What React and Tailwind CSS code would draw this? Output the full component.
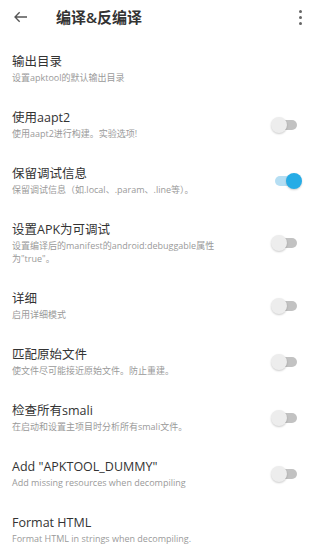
import React from 'react';

const font = { fontFamily: '"Open Sans", "Noto Sans CJK SC", sans-serif' };

const items = [
  { title: '输出目录', desc: '设置apktool的默认输出目录' },
  { title: '使用aapt2', desc: '使用aapt2进行构建。实验选项!', toggle: false },
  { title: '保留调试信息', desc: '保留调试信息（如.local、.param、.line等）。', toggle: true },
  { title: '设置APK为可调试', desc: '设置编译后的manifest的android:debuggable属性为"true"。', toggle: false },
  { title: '详细', desc: '启用详细模式', toggle: false },
  { title: '匹配原始文件', desc: '使文件尽可能接近原始文件。防止重建。', toggle: false },
  { title: '检查所有smali', desc: '在启动和设置主项目时分析所有smali文件。', toggle: false },
  { title: 'Add "APKTOOL_DUMMY"', desc: 'Add missing resources when decompiling', toggle: false },
  { title: 'Format HTML', desc: 'Format HTML in strings when decompiling.' },
];

const Toggle = ({ on }) => (
  <div className="relative w-[31px] h-[16px] shrink-0 mr-[7px]">
    <div
      className={`absolute left-[4px] top-[3px] w-[22px] h-[10px] rounded-full ${on ? 'bg-[#b5def3]' : 'bg-[#c2c2c2]'}`}
    />
    <div
      className={`absolute top-0 w-[16px] h-[16px] rounded-full shadow-[0_1px_2px_rgba(0,0,0,0.2)] ${on ? 'left-[15px] bg-[#26ace6]' : 'left-0 bg-[#ededed]'}`}
    />
  </div>
);

export default function App() {
  return (
    <div className="w-[309px] h-[550px] overflow-hidden bg-white" style={font}>
      {/* Toolbar */}
      <div className="h-[40px] flex items-center pb-[6px]">
        <div className="w-[56px] shrink-0 pl-[13px]">
          <svg className="w-[16px] h-[16px] text-[#555]" viewBox="0 0 24 24" fill="none" stroke="currentColor" strokeWidth="2">
            <path d="M21 12H3M10 5l-7 7 7 7" />
          </svg>
        </div>
        <div className="text-[15px] font-semibold text-[#333] leading-none">编译&amp;反编译</div>
        <div className="ml-auto mr-[7px] flex flex-col gap-[3px]">
          <span className="w-[3px] h-[3px] rounded-full bg-[#666]" />
          <span className="w-[3px] h-[3px] rounded-full bg-[#666]" />
          <span className="w-[3px] h-[3px] rounded-full bg-[#666]" />
        </div>
      </div>

      {items.map((it, i) => (
        <div key={i} className="flex items-center pl-[12px] pt-[13px] pb-[12px]">
          <div className="flex-1 min-w-0">
            <div className="text-[12.5px] leading-[18px] text-[#333]">{it.title}</div>
            <div className="w-[208px] text-[9px] leading-[13px] text-[#9a9a9a]">{it.desc}</div>
          </div>
          {it.toggle !== undefined && <Toggle on={it.toggle} />}
        </div>
      ))}
    </div>
  );
}
